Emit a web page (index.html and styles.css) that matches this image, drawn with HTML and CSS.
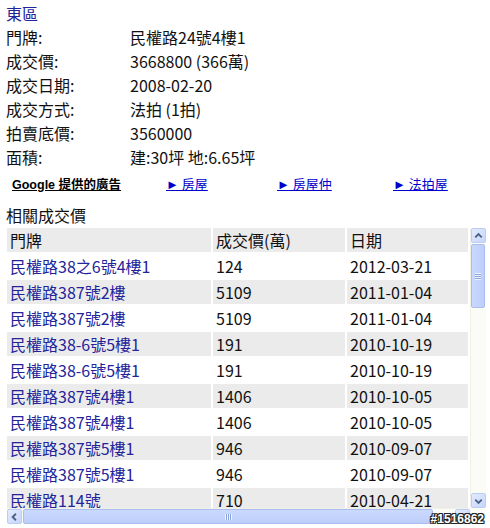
FILE: index.html
```html
<!DOCTYPE html>
<html lang="zh-Hant">
<head>
<meta charset="utf-8">
<title>東區</title>
<link rel="stylesheet" href="styles.css">
</head>
<body>
<div class="page">
  <div class="district">東區</div>
  <dl class="info">
    <dt>門牌:</dt><dd>民權路24號4樓1</dd>
    <dt>成交價:</dt><dd>3668800 (366萬)</dd>
    <dt>成交日期:</dt><dd>2008-02-20</dd>
    <dt>成交方式:</dt><dd>法拍 (1拍)</dd>
    <dt>拍賣底價:</dt><dd>3560000</dd>
    <dt>面積:</dt><dd>建:30坪 地:6.65坪</dd>
  </dl>
  <div class="ads">
    <a class="ads-title" href="#">Google 提供的廣告</a>
    <a class="ad ad-1" href="#">► 房屋</a>
    <a class="ad ad-2" href="#">► 房屋仲</a>
    <a class="ad" href="#">► 法拍屋</a>
  </div>
  <div class="section-title">相關成交價</div>
  <div class="scroller">
    <div class="viewport">
      <table class="deals">
        <thead>
          <tr><th class="c1">門牌</th><th class="c2">成交價(萬)</th><th class="c3">日期</th></tr>
        </thead>
        <tbody>
          <tr><td class="addr">民權路38之6號4樓1</td><td>124</td><td>2012-03-21</td></tr>
          <tr><td class="addr">民權路387號2樓</td><td>5109</td><td>2011-01-04</td></tr>
          <tr><td class="addr">民權路387號2樓</td><td>5109</td><td>2011-01-04</td></tr>
          <tr><td class="addr">民權路38-6號5樓1</td><td>191</td><td>2010-10-19</td></tr>
          <tr><td class="addr">民權路38-6號5樓1</td><td>191</td><td>2010-10-19</td></tr>
          <tr><td class="addr">民權路387號4樓1</td><td>1406</td><td>2010-10-05</td></tr>
          <tr><td class="addr">民權路387號4樓1</td><td>1406</td><td>2010-10-05</td></tr>
          <tr><td class="addr">民權路387號5樓1</td><td>946</td><td>2010-09-07</td></tr>
          <tr><td class="addr">民權路387號5樓1</td><td>946</td><td>2010-09-07</td></tr>
          <tr><td class="addr">民權路114號</td><td>710</td><td>2010-04-21</td></tr>
          <tr><td class="addr">民權路114號</td><td>710</td><td>2010-04-21</td></tr>
        </tbody>
      </table>
    </div>
    <div class="vbar">
      <div class="sb-btn"><svg width="14" height="14" viewBox="0 0 14 14"><polyline points="3.5,8.5 7,5 10.5,8.5" fill="none" stroke="#4d6185" stroke-width="2"/></svg></div>
      <div class="vthumb"><span class="grip-h"></span></div>
      <div class="vtrack"></div>
      <div class="sb-btn"><svg width="14" height="14" viewBox="0 0 14 14"><polyline points="3.5,5.5 7,9 10.5,5.5" fill="none" stroke="#4d6185" stroke-width="2"/></svg></div>
    </div>
    <div class="hbar">
      <div class="sb-btn"><svg width="14" height="14" viewBox="0 0 14 14"><polyline points="8.5,3.5 5,7 8.5,10.5" fill="none" stroke="#4d6185" stroke-width="2"/></svg></div>
      <div class="hthumb"><span class="grip-v"></span></div>
      <div class="sb-btn"><svg width="14" height="14" viewBox="0 0 14 14"><polyline points="5.5,3.5 9,7 5.5,10.5" fill="none" stroke="#4d6185" stroke-width="2"/></svg></div>
    </div>
    <div class="corner"></div>
    <span class="watermark">#1516862</span>
  </div>
</div>
</body>
</html>
```

FILE: styles.css
```css
html, body {
  margin: 0;
  padding: 0;
  background: #ffffff;
}

body {
  font-family: "Noto Sans CJK TC", "Liberation Sans", sans-serif;
  font-size: 16px;
  color: #111;
}

.page {
  padding: 1px 0 0 6px;
}

.district {
  line-height: 24px;
  color: #24249a;
}

.info {
  display: grid;
  grid-template-columns: 124px auto;
  margin: 0;
  line-height: 24px;
}

.info dt,
.info dd {
  margin: 0;
}

.ads {
  display: flex;
  align-items: center;
  height: 28px;
  padding: 0 0 6px 6px;
  font-size: 12px;
}

.ads a {
  text-decoration: underline;
}

.ads-title {
  width: 154px;
  color: #000;
  font-weight: bold;
  font-size: 12.5px;
  font-family: "Liberation Sans", "Noto Sans CJK TC", sans-serif;
}

.ad {
  color: #0000cc;
  font-size: 13px;
}

.ad-1 {
  width: 111px;
}

.ad-2 {
  width: 116px;
}

.section-title {
  line-height: 24px;
}

.scroller {
  position: relative;
  margin: 1px 0 0 1px;
  width: 479px;
  display: grid;
  grid-template-columns: 463px 16px;
  grid-template-rows: 280px 16px;
}

.viewport {
  overflow: hidden;
}

.deals {
  border-collapse: separate;
  border-spacing: 2px;
  margin: -2px 0 0 -2px;
  table-layout: fixed;
  width: 465px;
}

.deals th,
.deals td {
  height: 24px;
  padding: 0 3px;
  line-height: 24px;
  font-weight: normal;
  text-align: left;
  white-space: nowrap;
  color: #111;
}

.deals .c1 { width: 198px; }
.deals .c2 { width: 126px; }
.deals .c3 { width: 115px; }

.deals th {
  background: #ebebeb;
}

.deals tbody tr:nth-child(even) td {
  background: #ebebeb;
}

.deals td.addr {
  color: #24249a;
}

.vbar {
  display: flex;
  flex-direction: column;
  background: #fcfcf7;
  border-left: 1px solid #f0efe8;
  padding: 0 1px 0 0;
  box-sizing: border-box;
}

.hbar {
  display: flex;
  background: #fcfcf7;
  border-top: 1px solid #f0efe8;
}

.sb-btn {
  flex: none;
  width: 15px;
  height: 15px;
  box-sizing: border-box;
  border: 1px solid #bccdf5;
  border-radius: 2px;
  background: linear-gradient(135deg, #e3ebfe, #c5d5fc);
  display: flex;
  align-items: center;
  justify-content: center;
}

.sb-btn svg {
  display: block;
}

.vthumb {
  flex: none;
  height: 64px;
  margin-top: 1px;
  box-sizing: border-box;
  border: 1px solid #a9bdef;
  border-radius: 2px;
  background: linear-gradient(90deg, #c9d8fd, #bccefa);
  display: flex;
  align-items: center;
  justify-content: center;
}

.vtrack {
  flex: 1;
}

.grip-h {
  width: 6px;
  height: 7px;
  background: repeating-linear-gradient(180deg, #eef3ff 0 1px, #8ca4dc 1px 2px);
}

.hthumb {
  flex: none;
  width: 410px;
  margin: 0 auto 0 1px;
  box-sizing: border-box;
  border: 1px solid #a9bdef;
  border-radius: 2px;
  background: linear-gradient(180deg, #cad9fd, #bccefa);
  display: flex;
  align-items: center;
  justify-content: center;
}

.grip-v {
  width: 7px;
  height: 6px;
  background: repeating-linear-gradient(90deg, #eef3ff 0 1px, #8ca4dc 1px 2px);
}

.corner {
  background: #fcfcf7;
}

.watermark {
  position: absolute;
  right: 2px;
  bottom: -2px;
  font-family: "Liberation Sans", sans-serif;
  font-weight: bold;
  font-size: 12px;
  line-height: 14px;
  color: #ffffff;
  text-shadow: 1px 0 0 #222, -1px 0 0 #222, 0 1px 0 #222, 0 -1px 0 #222, 1px 1px 0 #222, -1px -1px 0 #222, 1px -1px 0 #222, -1px 1px 0 #222;
}
```
